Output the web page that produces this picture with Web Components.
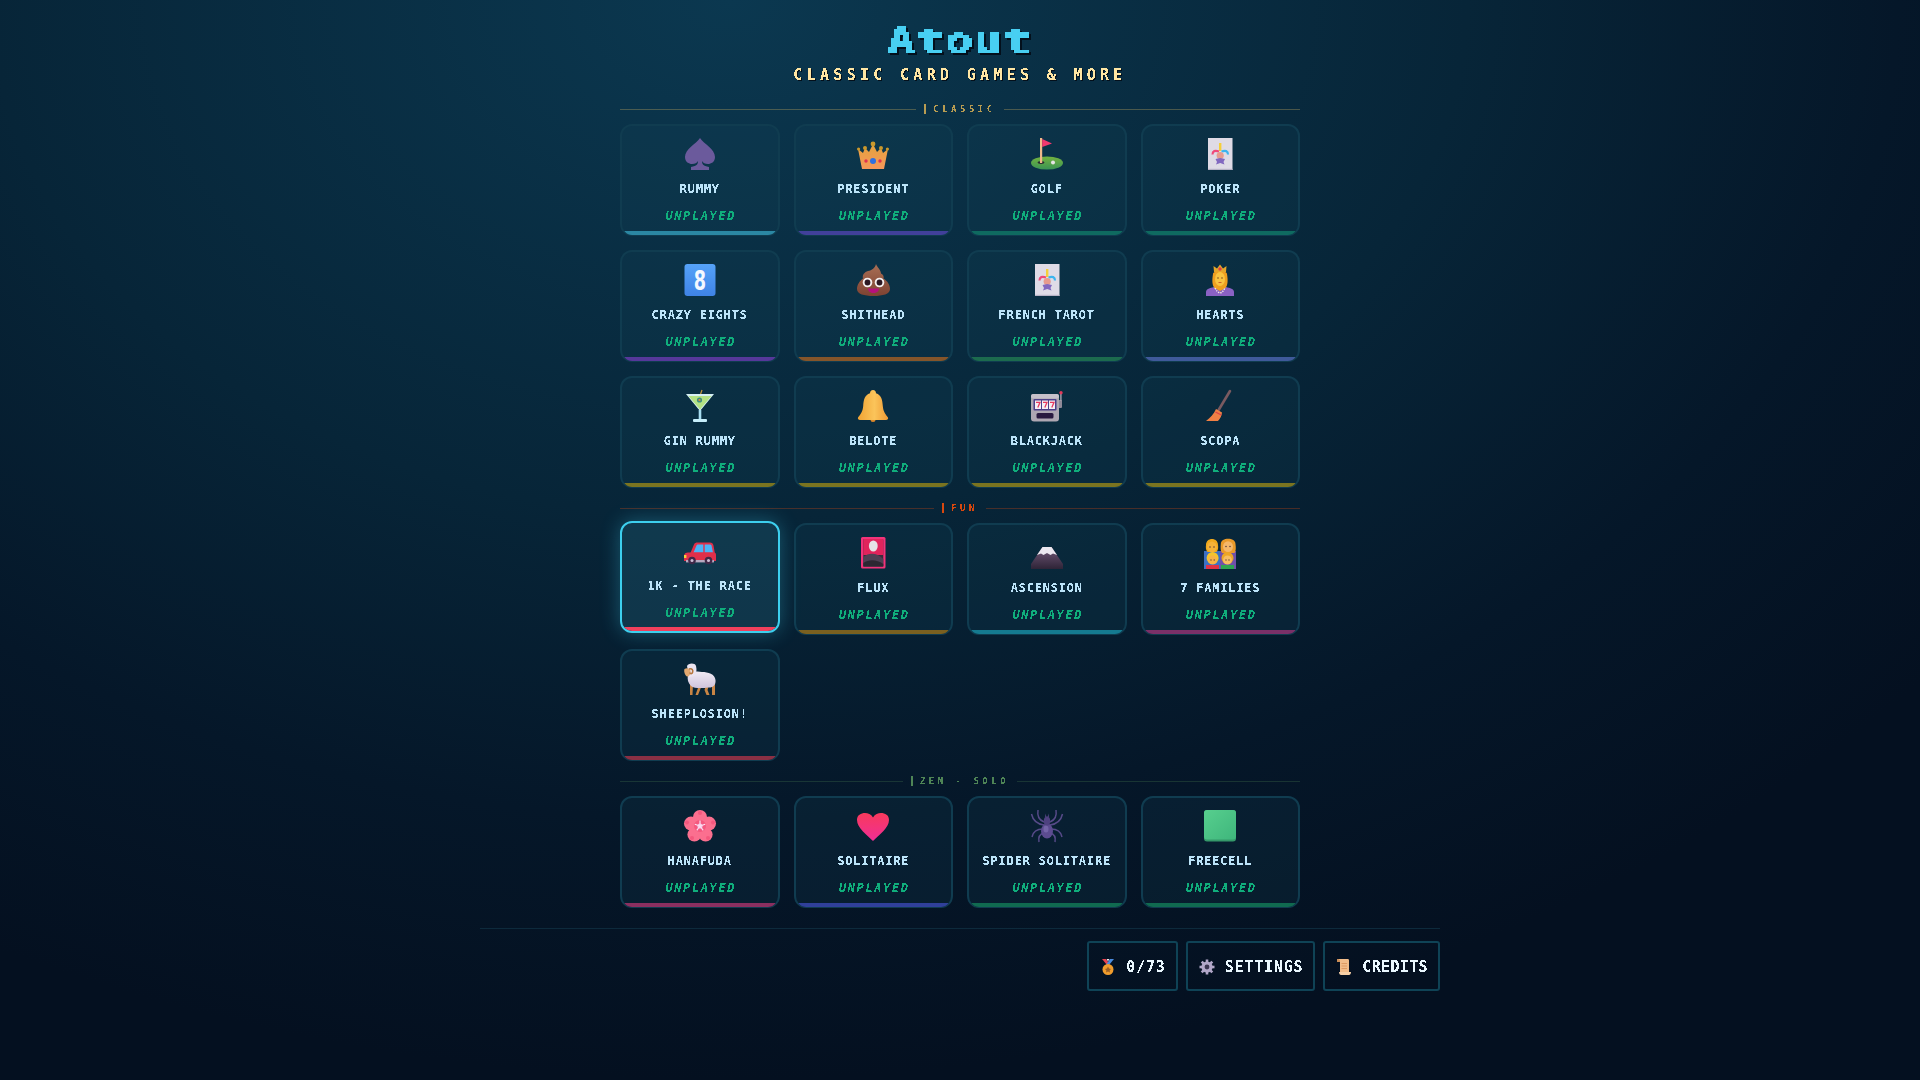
<!DOCTYPE html>
<html>
<head>
<meta charset="utf-8">
<title>Atout</title>
<style>
  html, body { margin: 0; padding: 0; }
  body {
    min-height: 100vh;
    background: radial-gradient(ellipse 80% 100% at 38% 0%, #0b3850 0%, #072538 48%, #051729 76%, #041020 100%);
    font-family: "DejaVu Sans Mono", monospace;
  }
</style>
</head>
<body>
<game-header></game-header>
<game-list>
  <game-section label="CLASSIC" tone="#b89c52" line="rgba(168,150,90,.42)">
    <game-card accent="#2b87a3"><game-icon slot="icon" name="spade"></game-icon>RUMMY</game-card>
    <game-card accent="#41409a"><game-icon slot="icon" name="crown"></game-icon>PRESIDENT</game-card>
    <game-card accent="#0f6a60"><game-icon slot="icon" name="golf"></game-icon>GOLF</game-card>
    <game-card accent="#0f6a60"><game-icon slot="icon" name="joker"></game-icon>POKER</game-card>
    <game-card accent="#56389a"><game-icon slot="icon" name="eight"></game-icon>CRAZY EIGHTS</game-card>
    <game-card accent="#85552a"><game-icon slot="icon" name="poop"></game-icon>SHITHEAD</game-card>
    <game-card accent="#1c6b4e"><game-icon slot="icon" name="joker"></game-icon>FRENCH TAROT</game-card>
    <game-card accent="#3f5a9a"><game-icon slot="icon" name="queen"></game-icon>HEARTS</game-card>
    <game-card accent="#7a7420"><game-icon slot="icon" name="martini"></game-icon>GIN RUMMY</game-card>
    <game-card accent="#7a7420"><game-icon slot="icon" name="bell"></game-icon>BELOTE</game-card>
    <game-card accent="#7a7420"><game-icon slot="icon" name="slot"></game-icon>BLACKJACK</game-card>
    <game-card accent="#7a7420"><game-icon slot="icon" name="broom"></game-icon>SCOPA</game-card>
  </game-section>
  <game-section label="FUN" tone="#d8480f" line="rgba(212,72,15,.32)">
    <game-card accent="#f0405c" selected><game-icon slot="icon" name="car"></game-icon>1K - THE RACE</game-card>
    <game-card accent="#7a6020"><game-icon slot="icon" name="flux"></game-icon>FLUX</game-card>
    <game-card accent="#157a90"><game-icon slot="icon" name="mountain"></game-icon>ASCENSION</game-card>
    <game-card accent="#7a3068"><game-icon slot="icon" name="family"></game-icon>7 FAMILIES</game-card>
    <game-card accent="#8a3044"><game-icon slot="icon" name="sheep"></game-icon>SHEEPLOSION!</game-card>
  </game-section>
  <game-section label="ZEN · SOLO" tone="#4f8556" line="rgba(74,122,80,.3)">
    <game-card accent="#8a2f60"><game-icon slot="icon" name="flower"></game-icon>HANAFUDA</game-card>
    <game-card accent="#30409a"><game-icon slot="icon" name="heart"></game-icon>SOLITAIRE</game-card>
    <game-card accent="#106a50"><game-icon slot="icon" name="spider"></game-icon>SPIDER SOLITAIRE</game-card>
    <game-card accent="#106a50"><game-icon slot="icon" name="green"></game-icon>FREECELL</game-card>
  </game-section>
</game-list>
<game-footer>
  <foot-button><game-icon slot="icon" name="medal" size="16"></game-icon>0/73</foot-button>
  <foot-button><game-icon slot="icon" name="gear" size="16"></game-icon>SETTINGS</foot-button>
  <foot-button style="--track: .35px"><game-icon slot="icon" name="scroll" size="16"></game-icon>CREDITS</foot-button>
</game-footer>

<script>
// alpha threshold, gives the hard edges of a bitmap font
const CRISP = `<svg width="0" height="0" style="position:absolute"><filter id="crisp" x="-5%" y="-20%" width="110%" height="140%" color-interpolation-filters="sRGB">
  <feComponentTransfer><feFuncA type="discrete" tableValues="0 0 1 1"/></feComponentTransfer></filter></svg>`;

// big blocks for the title: sample one pixel per cell, grow it back
const blocky = (id, cell) => `<svg width="0" height="0" style="position:absolute"><filter id="${id}" x="0" y="0" width="100%" height="100%" color-interpolation-filters="sRGB">
  <feFlood x="${Math.floor(cell / 2)}" y="${Math.floor(cell / 2)}" width="1" height="1"/>
  <feComposite width="${cell}" height="${cell}"/>
  <feTile result="grid"/>
  <feComposite in="SourceGraphic" in2="grid" operator="in"/>
  <feMorphology operator="dilate" radius="${Math.floor(cell / 2)}"/>
  <feComponentTransfer><feFuncA type="discrete" tableValues="0 1"/></feComponentTransfer>
</filter></svg>`;

const ICONS = {
  spade: `<path fill="#6b5a9c" d="M16 0C20 6 31 11 31 19C31 24 27 26 24 26C21 26 19 25 18 23C18 26 19 28 25 29V32H7V29C13 28 14 26 14 23C13 25 11 26 8 26C5 26 1 24 1 19C1 11 12 6 16 0Z"/>`,
  crown: `<defs><linearGradient id="g" x1="0" y1="0" x2="0" y2="1"><stop offset="0" stop-color="#e3a23c"/><stop offset="1" stop-color="#f7985a"/></linearGradient></defs>
    <path fill="url(#g)" d="M1 11L6 15L8 10L12 14L16 6L20 14L24 10L26 15L31 11L27 31H5Z"/>
    <g fill="#c9982c"><circle cx="1.6" cy="11" r="1.6"/><circle cx="8" cy="10" r="2"/><circle cx="16" cy="6" r="2.4"/><circle cx="24" cy="10" r="2"/><circle cx="30.4" cy="11" r="1.6"/></g>
    <circle cx="16" cy="23" r="3" fill="#2f6fe0"/><circle cx="9" cy="23" r="1.7" fill="#e2304f"/><circle cx="23" cy="23" r="1.7" fill="#e2304f"/>`,
  golf: `<defs><linearGradient id="g" x1="0" y1="0" x2="0" y2="1"><stop offset="0" stop-color="#74b33f"/><stop offset="1" stop-color="#3a9455"/></linearGradient></defs>
    <ellipse cx="16" cy="25" rx="16" ry="6.6" fill="url(#g)"/>
    <ellipse cx="10" cy="24.6" rx="3.4" ry="1.3" fill="#2a2a30"/><circle cx="22" cy="24.4" r="2" fill="#e6e6e6"/>
    <rect x="9" y="0" width="2.2" height="25" fill="#f0b98a"/><path fill="#f2386f" d="M11.2 1L21 5.5L11.2 9Z"/>`,
  joker: `<rect x="4" y="0" width="24.5" height="32" fill="#dfdbe6"/><rect x="4" y="30.8" width="24.5" height="1.2" fill="#b8b3c6"/>
    <path fill="#f5cf3a" d="M15 5h2.4v8h-2.4z"/>
    <path fill="none" stroke="#ef4a7a" stroke-width="2.2" d="M8.5 16.5C8.5 13 11 12 15 13.5"/>
    <path fill="none" stroke="#3cb4ee" stroke-width="2.2" d="M24 16.5C24 13 21.5 12 17.5 13.5"/>
    <circle cx="16.2" cy="17.5" r="3.6" fill="#e79b8e"/>
    <path fill="#8268c0" d="M11.5 21L16.2 20L21 21L19.5 24L20.5 26.5L16.2 25L12 26.5L13 24Z"/>`,
  eight: `<defs><linearGradient id="g" x1="0" y1="0" x2="0" y2="1"><stop offset="0" stop-color="#55a2f8"/><stop offset="1" stop-color="#3f83e6"/></linearGradient></defs>
    <rect x="0.5" y="0" width="31" height="32" rx="3" fill="url(#g)"/>
    <text transform="translate(16 25.5) scale(.68 1)" text-anchor="middle" font-family="DejaVu Sans" font-weight="700" font-size="26" fill="#f4f8ff">8</text>`,
  poop: `<defs><linearGradient id="g" x1="0" y1="0" x2="0" y2="1"><stop offset="0" stop-color="#a96f55"/><stop offset="1" stop-color="#7d4232"/></linearGradient></defs>
    <path fill="url(#g)" d="M19 0C20 3 24 6 24 9.5C26.5 10.5 27 13 26.5 14.5C30.5 17 33 21 33 25C33 30 26 32 16.5 32C7 32 0 30 0 25C0 21 2.5 17 6 14.5C5 11 7.5 8 11 7C15 6.5 18 4 19 0Z"/>
    <circle cx="10.5" cy="18.5" r="4.8" fill="#f4eeee"/><circle cx="22.5" cy="18.5" r="4.8" fill="#f4eeee"/>
    <circle cx="10.5" cy="18.5" r="2.9" fill="#2b1722"/><circle cx="22.5" cy="18.5" r="2.9" fill="#2b1722"/>
    <path fill="#b5107c" d="M11 24.5H22C22 30.5 11 30.5 11 24.5Z"/>`,
  queen: `<path fill="#8a61c4" d="M2 32V28C2 25 6 24 10 23H22C26 24 30 25 30 28V32Z"/>
    <path fill="#ef9f1f" d="M9 10C9 6 23 6 23 10C24 16 24 21 21.5 24L16 27L10.5 24C8 21 8 16 9 10Z"/>
    <ellipse cx="16" cy="15" rx="5" ry="7" fill="#f8c440"/>
    <path fill="none" stroke="#f3e8e2" stroke-width="1.4" stroke-dasharray="1.5 1" d="M11 24C12.5 27 14 28.5 16 29C18 28.5 19.5 27 21 24"/>
    <path fill="#e4a62a" d="M10 8L9.5 2L13 4.5L16 0.5L19 4.5L22.5 2L22 8Z"/><circle cx="16" cy="5" r="1.7" fill="#e23a4a"/>
    <circle cx="14" cy="14" r=".8" fill="#7a4a20"/><circle cx="18" cy="14" r=".8" fill="#7a4a20"/><path d="M14.5 18.5H17.5" stroke="#d0602a" stroke-width="1"/>`,
  martini: `<path d="M14.5 10L18 0" stroke="#c4953a" stroke-width="1.2"/>
    <path fill="#d6f0f4" d="M2 4H30L16 21Z"/><path fill="#b4e284" d="M4.5 6H27.5L16 19.5Z"/>
    <circle cx="15.5" cy="10" r="2.6" fill="#3d8f80"/><circle cx="15.5" cy="10" r="1.1" fill="#e88a3a"/>
    <rect x="14.7" y="20" width="2.6" height="9" fill="#a9def2"/><rect x="9" y="29" width="14" height="3" rx="1" fill="#c7eefa"/>`,
  bell: `<defs><linearGradient id="g" x1="0" y1="0" x2="1" y2="0"><stop offset="0" stop-color="#f0a334"/><stop offset=".55" stop-color="#fbc45a"/><stop offset="1" stop-color="#ee9a35"/></linearGradient></defs>
    <circle cx="16" cy="29.5" r="2.5" fill="#d9862a"/>
    <path fill="url(#g)" d="M16 0C18 0 19 1.5 19 3.2C24.5 5 25.4 10 25.8 16C26.2 22 29 25 31 27.5C31.5 29 30.5 30 29 30H3C1.5 30 .5 29 1 27.5C3 25 5.8 22 6.2 16C6.6 10 7.5 5 13 3.2C13 1.5 14 0 16 0Z"/>`,
  slot: `<rect x="27" y="10" width="4" height="8" rx="1" fill="#8f8a98"/><rect x="29.2" y="3" width="1.4" height="8" fill="#a8a3b0"/><circle cx="30" cy="2.8" r="1.7" fill="#e23a5a"/>
    <rect x="0" y="4" width="28" height="27.5" rx="3" fill="#aea7b2"/><rect x="0" y="4" width="28" height="4.5" rx="2" fill="#c6c0ca"/>
    <rect x="2.5" y="9" width="23" height="11.5" rx="1" fill="#4c3f88"/>
    <g fill="#f4eff4"><rect x="4" y="10.5" width="6" height="8.5"/><rect x="11" y="10.5" width="6" height="8.5"/><rect x="18" y="10.5" width="6" height="8.5"/></g>
    <g fill="none" stroke="#e83a5e" stroke-width="1.3"><path d="M5 12.3H9L6.8 17.5"/><path d="M12 12.3H16L13.8 17.5"/><path d="M19 12.3H23L20.8 17.5"/></g>
    <rect x="5.5" y="23" width="17" height="5.5" rx="1.5" fill="#2a1a40"/>`,
  broom: `<path d="M26 1L14 21" stroke="#7a5a60" stroke-width="2.6" stroke-linecap="round"/>
    <path fill="#f08044" d="M12 19L18 22.5C17.8 26 16 29 14 31H2C6 28 10 24 12 19Z"/>
    <path d="M11.5 22L17.3 25" stroke="#d9434a" stroke-width="1.4"/>`,
  car: `<path fill="#e02f4a" d="M6 19L10 9.5C10.5 8 12 7.5 13.5 7.5H26C28 7.5 29 8.5 29.5 10.5L31 19Z"/>
    <path fill="#4ab4f8" d="M9.5 17.5L12.5 10.5C12.8 9.7 13.3 9.5 14 9.5H19.3V17.5Z"/><path fill="#4ab4f8" d="M20.7 9.5H26C26.8 9.5 27.3 9.9 27.5 10.5L29 17.5H20.7Z"/>
    <path fill="#e02f4a" d="M0 21C0 18.5 2 17.5 4 17.5H30C31.5 17.5 32 18.5 32 20V26H0Z"/>
    <rect x="0" y="20" width="2.4" height="3" fill="#f5d03c"/><rect x="2" y="25" width="28" height="2.4" fill="#b8a8c0"/>
    <circle cx="8" cy="25.5" r="3.8" fill="#3f2848"/><circle cx="24.5" cy="25.5" r="3.8" fill="#3f2848"/>
    <circle cx="8" cy="25.5" r="1.5" fill="#cdbcd4"/><circle cx="24.5" cy="25.5" r="1.5" fill="#cdbcd4"/>`,
  flux: `<rect x="4" y="0" width="24.5" height="31.5" rx="1.5" fill="#f2337a"/><rect x="6.3" y="2" width="20" height="27.5" rx="1" fill="#3a2c3c"/>
    <path fill="#e0245c" d="M6.3 3C6.3 2.5 6.8 2 7.3 2H25.3C25.8 2 26.3 2.5 26.3 3V18H6.3Z"/>
    <ellipse cx="16.3" cy="9" rx="4.4" ry="5.6" fill="#e6e2e6"/>
    <path fill="#4e4054" d="M6.3 20C12 15 20 15.5 26.3 22V29.5H6.3Z"/><path fill="#2c2732" d="M6.3 26C12 22 20 22.5 26.3 27V29.5H6.3Z"/>`,
  mountain: `<defs><linearGradient id="g" x1="0" y1="0" x2="0" y2="1"><stop offset="0" stop-color="#735879"/><stop offset="1" stop-color="#2e2437"/></linearGradient></defs>
    <path fill="url(#g)" d="M11.5 10H20.5L32 27V32H0V27Z"/>
    <path fill="#ece8f0" d="M11.5 10H20.5L26 18L22 16.4L19.5 18L16 16L12.5 18L10 16.6L6 18Z"/>`,
  family: `<rect x="0" y="14" width="16" height="18" fill="#3c70c4"/><rect x="16" y="14" width="16" height="18" fill="#7050aa"/>
    <path fill="#f0a81c" d="M2 8C2 0 14 0 14 8C14.5 11 14 13 12.5 15H3.5C2 13 1.5 11 2 8Z"/><ellipse cx="8" cy="10" rx="4.8" ry="5.4" fill="#f5b238"/>
    <path fill="#ea9a2a" d="M16.8 7C16.8 0 31.5 0 31.5 7C32 11 32 14 30.5 16H18C16.5 14 16.4 11 16.8 7Z"/><ellipse cx="24" cy="9.6" rx="5" ry="5.4" fill="#f5b76a"/>
    <rect x="2" y="28" width="13" height="4" fill="#e03246"/><rect x="17" y="28" width="13" height="4" fill="#2ea552"/>
    <circle cx="8.6" cy="21" r="6" fill="#f5c52c"/><ellipse cx="8.6" cy="23" rx="4.4" ry="4.6" fill="#f7b447"/>
    <circle cx="23.5" cy="21" r="6" fill="#eda624"/><ellipse cx="23.5" cy="23" rx="4.4" ry="4.6" fill="#f7bd62"/>
    <g fill="#60403a"><circle cx="6" cy="10" r=".8"/><circle cx="10" cy="10" r=".8"/><circle cx="22" cy="9.5" r=".8"/><circle cx="26" cy="9.5" r=".8"/><circle cx="7" cy="23" r=".7"/><circle cx="10.2" cy="23" r=".7"/><circle cx="22" cy="23" r=".7"/><circle cx="25" cy="23" r=".7"/></g>`,
  sheep: `<defs><linearGradient id="g" x1="0" y1="0" x2="0" y2="1"><stop offset="0" stop-color="#f0eaf4"/><stop offset="1" stop-color="#cfc4dc"/></linearGradient></defs>
    <g fill="#c98544"><path d="M6 21H9L8.5 32H6Z"/><path d="M15 22H18L14 32H11.5Z"/><path d="M22 22H25L23.5 27L25.5 32H22.5L20.5 27Z"/><rect x="28" y="21" width="3" height="11"/></g>
    <path fill="url(#g)" d="M4 12C7 8 14 8 18 9C24 9 31 11 31.5 17C32 22 29 25 24 24.5C18 25.5 10 25.5 7 23C4 20 3 16 4 12Z"/>
    <path fill="#ebe4f0" d="M3 3C4 0 11 -.5 12 3C13 7 12.5 10 10.5 13L5 14Z"/>
    <path fill="#e2a870" d="M.5 6C2.5 4.5 6 5 6.5 8C7 11 5 14 3 13.5C1 12.5 -.5 8 .5 6Z"/>
    <path fill="none" stroke="#b5763c" stroke-width="1.6" d="M5 6C8 5 9.5 7 8.5 9.5C8 11 6 11 6 9.5"/>`,
  flower: `<g fill="#fb6f8f"><circle cx="16" cy="7" r="7"/><circle cx="7" cy="13.6" r="7"/><circle cx="25" cy="13.6" r="7"/><circle cx="10.4" cy="24.6" r="7"/><circle cx="21.6" cy="24.6" r="7"/></g>
    <g fill="#f4587e"><circle cx="16" cy="16" r="6"/><circle cx="16" cy="3" r="2"/><circle cx="3" cy="12.6" r="2"/><circle cx="29" cy="12.6" r="2"/><circle cx="8" cy="28" r="2"/><circle cx="24" cy="28" r="2"/></g>
    <circle cx="16" cy="16" r="2.6" fill="#f5c2e4"/>
    <g stroke="#fbdcf0" stroke-width="1.2"><path d="M16 16V10.5"/><path d="M16 16L10.8 14.3"/><path d="M16 16L21.2 14.3"/><path d="M16 16L12.8 20.4"/><path d="M16 16L19.2 20.4"/></g>`,
  heart: `<defs><linearGradient id="g" x1="0" y1="0" x2="0" y2="1"><stop offset="0" stop-color="#f83a5c"/><stop offset="1" stop-color="#f02e96"/></linearGradient></defs>
    <path fill="url(#g)" d="M16 31C10 25 0 18 0 10C0 5 4 3 8 3C11 3 14 4 16 7.5C18 4 21 3 24 3C28 3 32 5 32 10C32 18 22 25 16 31Z"/>`,
  spider: `<g fill="none" stroke="#564a88" stroke-width="1.5">
      <path d="M13 12C8 10 6 6 7 0"/><path d="M19 12C24 10 26 6 25 0"/>
      <path d="M13 15C6 14 2 11 0.5 4"/><path d="M19 15C26 14 30 11 31.5 4"/>
      <path d="M12 19C6 19 2 22 1 27"/><path d="M20 19C26 19 30 22 31 27"/>
      <path d="M13 23C9 24 7 27 8 32"/><path d="M19 23C23 24 25 27 24 32"/></g>
    <ellipse cx="16" cy="21" rx="6" ry="7.5" fill="#5c4c90"/><ellipse cx="15" cy="19" rx="2.5" ry="3.5" fill="#7464a8"/>
    <ellipse cx="16" cy="11" rx="3.2" ry="4.5" fill="#4e4180"/><path d="M14 7L14.5 3.5L15.5 7M18 7L17.5 3.5L16.5 7" fill="#4e4180"/>`,
  green: `<defs><linearGradient id="g" x1="0" y1="0" x2="1" y2="1"><stop offset="0" stop-color="#57cf8e"/><stop offset="1" stop-color="#3fb67c"/></linearGradient></defs>
    <rect x="0" y="0" width="32" height="31.5" rx="3" fill="#35996a"/><rect x="0" y="0" width="32" height="29.5" rx="3" fill="url(#g)"/>`,
  medal: `<path fill="#e8434f" d="M2 0H6L10 6H7Z"/><path fill="#4a8ce0" d="M14 0H10L6 6H9Z"/><path fill="#eee" d="M6.6 0H9.4L8 2.4Z"/>
    <circle cx="8" cy="10.5" r="5.5" fill="#f09c2c"/><path fill="#9a5f24" d="M8 7.5L9 9.6L11 10L9.6 11.5L10 13.6L8 12.6L6 13.6L6.4 11.5L5 10L7 9.6Z"/>`,
  gear: `<g fill="#b1a7c8"><circle cx="8" cy="8" r="5.6"/><g stroke="#b1a7c8" stroke-width="2.6"><path d="M8 .5V15.5"/><path d="M.5 8H15.5"/><path d="M2.7 2.7L13.3 13.3"/><path d="M13.3 2.7L2.7 13.3"/></g></g><circle cx="8" cy="8" r="2.4" fill="#3a3550"/>`,
  scroll: `<path fill="#c98c56" d="M1 0H4V3H1Z"/><path fill="#f2bd8a" d="M2 0H12C13 0 13 1 13 2V14H4V2C4 1 3 0 2 0Z"/>
    <path fill="#dd9a62" d="M5.5 4H11V5H5.5ZM5.5 6.5H11V7.5H5.5ZM5.5 9H11V10H5.5Z"/><path fill="#f6cfa6" d="M3 13H15C15 15 14 16 13 16H5C4 16 3 15 3 13Z"/>`
};

class GameIcon extends HTMLElement {
  constructor() {
    super();
    this.shadowDOM = this.attachShadow({ mode: "open" });
  }

  connectedCallback() {
    const size = this.getAttribute("size") || 32;
    this.shadowDOM.innerHTML = `
      <style>
        :host { display: block; width: ${size}px; height: ${size}px; flex: none; }
        svg { display: block; overflow: visible; }
      </style>
      <svg width="${size}" height="${size}" viewBox="0 0 ${size} ${size}">${ICONS[this.getAttribute("name")]}</svg>`;
  }
}
customElements.define("game-icon", GameIcon);

class GameHeader extends HTMLElement {
  constructor() {
    super();
    this.shadowDOM = this.attachShadow({ mode: "open" });
  }

  connectedCallback() {
    this.shadowDOM.innerHTML = `
      <style>
        :host { display: block; text-align: center; padding-top: 23px; margin-bottom: 20px; }
        h1, p { margin: 0; font-family: "DejaVu Sans Mono", monospace; font-weight: 700; }
        h1 {
          font-size: 36px;
          line-height: 36px;
          color: #48cff2;
          letter-spacing: 1px;
          -webkit-text-stroke: .7px #48cff2;
          filter: url(#big) drop-shadow(2px 2px 0 #03101c);
        }
        h1 span { display: inline-block; transform: scaleX(1.28); }
        p {
          margin-top: 8px;
          font-size: 15px;
          line-height: 16px;
          color: #ffe6a3;
          letter-spacing: 4.3px;
          filter: url(#crisp) drop-shadow(1px 1px 0 #03101c);
        }
      </style>
      ${blocky("big", 3)}${CRISP}
      <h1><span>Atout</span></h1>
      <p>CLASSIC CARD GAMES &amp; MORE</p>`;
  }
}
customElements.define("game-header", GameHeader);

class GameList extends HTMLElement {
  constructor() {
    super();
    this.shadowDOM = this.attachShadow({ mode: "open" });
    this.shadowDOM.innerHTML = `
      <style>
        :host { display: flex; flex-direction: column; gap: 14px; width: 680px; margin: 0 auto; }
      </style>
      <slot></slot>`;
  }
}
customElements.define("game-list", GameList);

class GameSection extends HTMLElement {
  constructor() {
    super();
    this.shadowDOM = this.attachShadow({ mode: "open" });
  }

  connectedCallback() {
    this.shadowDOM.innerHTML = `
      <style>
        :host { display: block; }
        .head { display: flex; align-items: center; height: 12px; margin-bottom: 9px; }
        .rule { flex: 1; height: 1px; background: ${this.getAttribute("line")}; }
        .label {
          display: flex;
          align-items: center;
          gap: 7px;
          margin: 0 8px;
          color: ${this.getAttribute("tone")};
          font-size: 9px;
          font-weight: 700;
          line-height: 10px;
          letter-spacing: 3.5px;
        }
        .label i { display: block; width: 2px; height: 10px; background: currentColor; }
        .label span { filter: url(#crisp); }
        .grid { display: grid; grid-template-columns: repeat(4, 1fr); gap: 14px; }
      </style>
      ${CRISP}
      <div class="head">
        <div class="rule"></div>
        <div class="label"><i></i><span>${this.getAttribute("label")}</span></div>
        <div class="rule"></div>
      </div>
      <div class="grid"><slot></slot></div>`;
  }
}
customElements.define("game-section", GameSection);

class GameCard extends HTMLElement {
  constructor() {
    super();
    this.shadowDOM = this.attachShadow({ mode: "open" });
  }

  connectedCallback() {
    this.shadowDOM.innerHTML = `
      <style>
        :host { display: block; min-width: 0; }
        :host([selected]) {
          transform: translateY(-2px);
          border-radius: 12px;
          box-shadow: 0 0 20px rgba(61, 207, 238, .32);
        }
        .card {
          display: flex;
          flex-direction: column;
          align-items: center;
          box-sizing: border-box;
          height: 112px;
          padding-top: 12px;
          border: 2px solid #103c50;
          border-bottom-width: 1px;
          border-radius: 12px;
          overflow: hidden;
          background: rgba(22, 72, 92, .2);
        }
        :host([selected]) .card {
          border-color: #3dcfee;
          border-bottom-width: 2px;
          background: rgba(40, 110, 135, .28);
        }
        .name {
          margin-top: 12px;
          color: #bce4f9;
          font-weight: 700;
          font-size: 12px;
          line-height: 14px;
          letter-spacing: .8px;
          white-space: nowrap;
          filter: url(#crisp);
        }
        .status {
          margin-top: 13px;
          padding-left: 2px;
          color: #10ae7c;
          font-style: italic;
          font-weight: 700;
          font-size: 12px;
          line-height: 14px;
          letter-spacing: 1.6px;
          filter: url(#crisp);
        }
        .bar { flex: none; width: 100%; height: 4px; margin-top: auto; background: ${this.getAttribute("accent")}; }
      </style>
      ${CRISP}
      <div class="card">
        <slot name="icon"></slot>
        <div class="name"><slot></slot></div>
        <div class="status">UNPLAYED</div>
        <div class="bar"></div>
      </div>`;
  }
}
customElements.define("game-card", GameCard);

class GameFooter extends HTMLElement {
  constructor() {
    super();
    this.shadowDOM = this.attachShadow({ mode: "open" });
    this.shadowDOM.innerHTML = `
      <style>
        :host {
          display: flex;
          justify-content: flex-end;
          gap: 8px;
          width: 960px;
          margin: 20px auto 0;
          padding-top: 12px;
          border-top: 1px solid #0d2a3c;
        }
      </style>
      <slot></slot>`;
  }
}
customElements.define("game-footer", GameFooter);

class FootButton extends HTMLElement {
  constructor() {
    super();
    this.shadowDOM = this.attachShadow({ mode: "open" });
    this.shadowDOM.innerHTML = `
      <style>
        :host {
          display: flex;
          align-items: center;
          gap: 10px;
          box-sizing: border-box;
          height: 50px;
          padding: 1px 10px 0 11px;
          border: 2px solid #0f4356;
          border-radius: 3px;
          color: #eaf8ff;
          font-family: "DejaVu Sans Mono", monospace;
          font-weight: 700;
          font-size: 15px;
          letter-spacing: var(--track, .8px);
        }
        span { filter: url(#crisp); }
      </style>
      ${CRISP}
      <slot name="icon"></slot><span><slot></slot></span>`;
  }
}
customElements.define("foot-button", FootButton);
</script>
</body>
</html>
